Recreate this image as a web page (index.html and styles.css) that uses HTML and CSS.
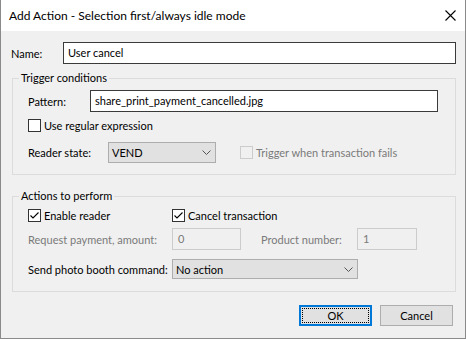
FILE: index.html
```html
<!DOCTYPE html>
<html>
<head>
<meta charset="utf-8">
<title>Add Action</title>
<link rel="stylesheet" href="styles.css">
</head>
<body>
<div class="window">
  <div class="titlebar">
    <span class="title">Add Action - Selection first/always idle mode</span>
    <svg class="close" width="11" height="11" viewBox="0 0 11 11"><path d="M0.5 0.5L10.5 10.5M10.5 0.5L0.5 10.5" stroke="#000" stroke-width="1.1" fill="none"/></svg>
  </div>
  <div class="content">
    <div class="row name-row">
      <span class="label name-label">Name:</span>
      <div class="textbox grow">User cancel</div>
    </div>

    <fieldset class="group group-trigger">
      <legend>Trigger conditions</legend>
      <div class="group-body trigger-body">
        <div class="row pattern-row">
          <span class="label pattern-label">Pattern:</span>
          <div class="textbox grow">share_print_payment_cancelled.jpg</div>
        </div>
        <div class="row check-row">
          <span class="check"></span><span>Use regular expression</span>
        </div>
        <div class="row reader-row">
          <span class="label reader-label">Reader state:</span>
          <div class="combo reader-combo">
            <span>VEND</span>
            <svg class="chev" width="9" height="5" viewBox="0 0 9 5"><path d="M0.5 0.5L4.5 4.5L8.5 0.5" stroke="#555" stroke-width="1" fill="none"/></svg>
          </div>
          <span class="check disabled trigger-check"></span><span class="dim">Trigger when transaction fails</span>
        </div>
      </div>
    </fieldset>

    <fieldset class="group group-actions">
      <legend>Actions to perform</legend>
      <div class="group-body actions-body">
        <div class="row checks-row">
          <div class="check-item first-col">
            <span class="check checked"><svg width="13" height="13" viewBox="0 0 13 13"><path d="M2.5 6.5L5 9L10.5 3.5" stroke="#000" stroke-width="1.1" fill="none"/></svg></span><span>Enable reader</span>
          </div>
          <div class="check-item">
            <span class="check checked"><svg width="13" height="13" viewBox="0 0 13 13"><path d="M2.5 6.5L5 9L10.5 3.5" stroke="#000" stroke-width="1.1" fill="none"/></svg></span><span>Cancel transaction</span>
          </div>
        </div>
        <div class="row payment-row">
          <span class="label dim first-col">Request payment, amount:</span>
          <div class="textbox disabled amount-box">0</div>
          <span class="label dim product-label">Product number:</span>
          <div class="textbox disabled product-box">1</div>
        </div>
        <div class="row send-row">
          <span class="label first-col">Send photo booth command:</span>
          <div class="combo send-combo">
            <span>No action</span>
            <svg class="chev" width="9" height="5" viewBox="0 0 9 5"><path d="M0.5 0.5L4.5 4.5L8.5 0.5" stroke="#555" stroke-width="1" fill="none"/></svg>
          </div>
        </div>
      </div>
    </fieldset>

    <div class="buttons">
      <button class="btn default"><span class="focus">OK</span></button>
      <button class="btn">Cancel</button>
    </div>
  </div>
</div>
</body>
</html>
```

FILE: styles.css
```css
* { box-sizing: border-box; }

html, body {
  margin: 0;
  padding: 0;
  background: #f0f0f0;
}

body {
  font-family: Lato, "Liberation Sans", sans-serif;
  font-size: 11px;
  color: #000;
}

.window {
  width: 466px;
  height: 339px;
  background: #f0f0f0;
  border: 1px solid #8a8a8a;
  border-top: none;
  display: flex;
  flex-direction: column;
}

.titlebar {
  height: 31px;
  flex: none;
  background: #fff;
  display: flex;
  align-items: center;
  justify-content: space-between;
  padding: 0 9px 0 8px;
}

.title {
  font-size: 12px;
  line-height: 16px;
  padding-top: 1px;
}

.close {
  display: block;
}

.content {
  padding: 0 9px 0 10px;
  display: flex;
  flex-direction: column;
}

.row {
  display: flex;
  align-items: center;
  flex: none;
}

.label {
  flex: none;
  white-space: nowrap;
}

.grow { flex: 1; min-width: 0; }

.name-row {
  margin-top: 11px;
  height: 22px;
}

.name-label { width: 52px; }

.textbox {
  height: 22px;
  background: #fff;
  border: 1px solid #3a3a3a;
  padding: 0 4px;
  line-height: 20px;
  white-space: nowrap;
  overflow: hidden;
}

.textbox.disabled {
  background: #f0f0f0;
  border-color: #cccccc;
  color: #7a7a7a;
  padding-left: 5px;
}

.group {
  margin: 7px 0 0 1px;
  padding: 0;
  border: 1px solid #dcdcdc;
  min-width: 0;
}

.group legend {
  margin-left: 6px;
  padding: 0 2px;
  line-height: 14px;
  font-size: 11px;
}

.group-body {
  padding: 5px 17px 11px 15px;
}

.pattern-row { height: 22px; }
.pattern-label { width: 62px; }

.check-row {
  height: 22px;
  margin-top: 2px;
}

.check {
  width: 13px;
  height: 13px;
  border: 1px solid #333;
  background: #fff;
  flex: none;
  margin-right: 3px;
  position: relative;
}

.check svg {
  position: absolute;
  left: -1px;
  top: -1px;
}

.check.disabled {
  border-color: #cccccc;
  background: #f0f0f0;
}

.dim { color: #7a7a7a; }

.reader-row {
  height: 21px;
  margin-top: 6px;
}

.reader-label { width: 80px; }

.combo {
  height: 21px;
  background: #e1e1e1;
  border: 1px solid #adadad;
  display: flex;
  align-items: center;
  justify-content: space-between;
  padding: 0 4px 0 3px;
  flex: none;
}

.chev { display: block; }

.reader-combo { width: 108px; }

.trigger-check { margin-left: 24px; }

.group-actions { margin-top: 14px; }

.actions-body {
  padding: 1px 17px 12px 15px;
}

.checks-row { height: 22px; }

.check-item {
  display: flex;
  align-items: center;
}

.first-col { width: 144px; flex: none; }

.payment-row {
  height: 22px;
  margin-top: 2px;
}

.amount-box { width: 69px; }

.product-label {
  width: 96px;
  margin-left: 20px;
}

.product-box { width: 60px; padding-left: 6px; }

.send-row {
  height: 20px;
  margin-top: 9px;
}

.send-combo {
  width: 186px;
  height: 20px;
}

.buttons {
  display: flex;
  justify-content: flex-end;
  gap: 8px;
  margin: 13px 3px 0 0;
}

.btn {
  width: 73px;
  height: 21px;
  background: #e1e1e1;
  border: 1px solid #adadad;
  font-family: Lato, "Liberation Sans", sans-serif;
  font-size: 11px;
  color: #000;
  padding: 0;
  margin: 0;
  display: flex;
  align-items: center;
  justify-content: center;
}

.btn.default {
  border: 2px solid #0078d7;
  padding: 1px;
}

.btn .focus {
  flex: 1;
  align-self: stretch;
  border: 1px dotted #000;
  display: flex;
  align-items: center;
  justify-content: center;
}
```
